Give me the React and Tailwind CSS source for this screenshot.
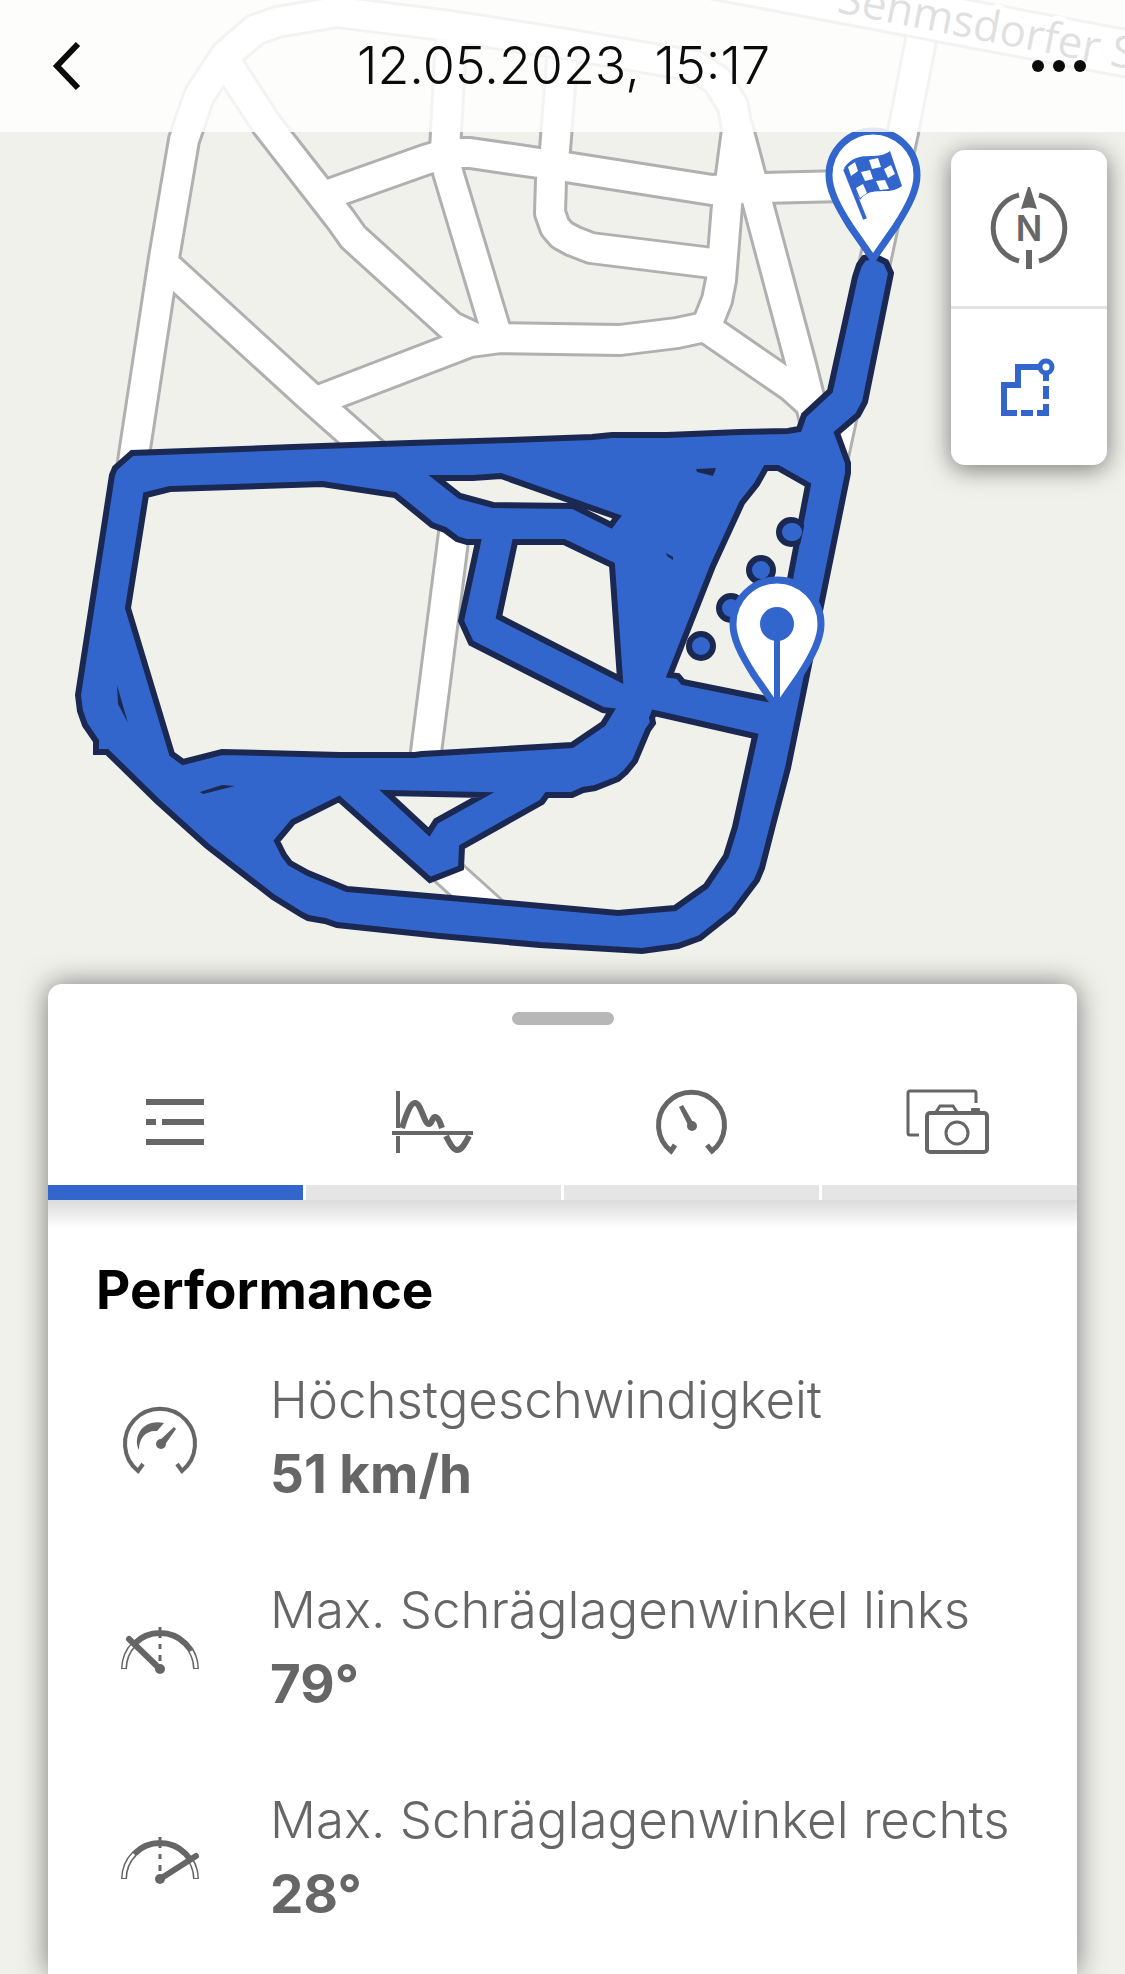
import { useState } from 'react'

const roads = [
  'M131 478 L134 455 L164 258 L184 140 L199 96 L226 55 L255 30 L277 22 L337 12 L450 26 L560 43 L695 66 L717 80 L733 106 L737 130 L727 205 L721 280 L717 300 L707 325',
  'M737 125 L801 365 L816 425',
  'M318 198 L425 160 L448 153 L470 153 L553 165 L712 190 L760 188 L885 185',
  'M228 65 L267 125 L341 220 L353 237 L452 327 L480 340',
  'M160 260 L311 398 L388 466',
  'M311 403 L470 342 L500 338 L620 340 L677 333 L705 327 L792 387 L812 405',
  'M451 40 L445 150 L448 172 L497 335',
  'M562 60 L555 150 L551 180 L550 213 L555 227 L562 235 L573 241 L591 248 L712 263',
  'M921 40 L903 132 L832 461',
  'M455 525 L425 760',
  'M440 865 L500 919',
]

const track = [
  // outer edge
  'M874 256 L886 262 L891 273 L865 402 L858 415 L837 433 L848 463 L848 473 L807 675 L788 768 L773 825 L762 868 L757 880 L733 912 L700 938 L678 946 L642 951 L540 945 L440 936 L337 925 L325 921 L308 918 L302 915 L273 897 L207 846 L157 801 L107 752 L96 752 L96 741 L85 725 L80 711 L78 695 L112 475 L115 468 L132 453 L293 447 L410 443 L510 440 L592 437 L612 435 L667 435 L740 432 L788 431 L799 429 L804 415 L830 391 L855 277 L859 265 L864 258 Z',
  // enclosed areas
  'M146 495 L170 489 L322 484 L395 495 L432 525 L445 530 L457 539 L467 542 L478 542 L461 621 L471 643 L603 710 L611 711 L603 724 L572 745 L440 753 L422 754 L415 755 L340 755 L222 752 L183 762 L172 754 L128 608 Z',
  'M437 478 L473 478 L501 476 L617 517 L611 525 L573 506 L493 505 L460 496 Z',
  'M515 542 L564 542 L612 565 L620 679 L499 617 Z',
  'M766 468 L778 468 L808 485 L767 699 L683 682 L678 676 L670 675 L713 566 L742 503 L757 484 Z',
  'M654 713 L755 736 L735 827 L726 856 L706 886 L675 908 L618 913 L440 897 L347 889 L308 873 L290 863 L284 855 L277 841 L293 822 L339 799 L430 880 L461 868 L462 847 L542 802 L547 795 L572 795 L583 790 L595 788 L618 779 L626 772 L635 761 L648 730 L653 723 L652 718 Z',
  'M387 793 L483 795 L436 821 L429 832 Z',
].join(' ')

const waypoints = [[761, 570], [731, 608], [701, 646]]

const flagGaps = [
  'M848 167 L855 162 L858 171 L851 176 Z',
  'M869 160 L878 158 L881 167 L872 169 Z',
  'M861 172 L870 170 L873 179 L865 181 Z',
  'M884 169 L891 165 L895 174 L888 178 Z',
  'M856 188 L863 184 L867 193 L860 198 Z',
  'M876 181 L885 180 L889 189 L880 190 Z',
]

function Pin({ x, y, children }) {
  return (
    <g>
      <path
        transform={`translate(${x} ${y})`}
        d="M0 84 L-23 51 C-37 29 -44 14 -44 0 A44 44 0 0 1 44 0 C44 14 37 29 23 51 Z"
        fill="#fff"
        stroke="#3366cc"
        strokeWidth="7"
      />
      {children}
    </g>
  )
}

function RideMap() {
  return (
    <svg viewBox="0 0 1125 990" className="absolute inset-x-0 top-0 w-full" role="img" aria-label="Karte">
      <g fill="none" strokeLinejoin="round">
        <path d="M700 -27 L1140 56" stroke="#b0b0b0" strokeWidth="50" />
        {roads.map((d) => <path key={d} d={d} stroke="#b0b0b0" strokeWidth="34" />)}
        <path d="M700 -27 L1140 56" stroke="#fff" strokeWidth="44" />
        {roads.map((d) => <path key={d} d={d} stroke="#fff" strokeWidth="28" />)}
      </g>
      <text
        transform="translate(836 12) rotate(11)"
        className="font-['Open_Sans','Noto_Sans',sans-serif] text-[44px]"
        fill="#333"
        stroke="#fff"
        strokeWidth="10"
        strokeLinejoin="round"
        paintOrder="stroke"
      >
        Sehmsdorfer S
      </text>

      <path d={track} fill="#3366cc" fillRule="evenodd" stroke="#1b2952" strokeWidth="6" />
      <g fill="#1b2952">
        <path d="M117 685 L128 723 L118 704 Z" />
        <path d="M200 792 L222 785 L235 786 L203 794 Z" />
        <path d="M696 469 L716 468 L713 476 L697 472 Z" />
        <path d="M666 553 L673 557 L673 560 L667 556 Z" />
      </g>
      <circle cx="791" cy="532" r="12" fill="#3366cc" stroke="#1b2952" strokeWidth="6" />
      <path d="M812 513 L804 551" stroke="#3366cc" strokeWidth="10" />
      <circle cx="793" cy="532" r="9" fill="#3366cc" />
      {waypoints.map(([cx, cy]) => (
        <circle key={cx} cx={cx} cy={cy} r="12" fill="#3366cc" stroke="#1b2952" strokeWidth="6" />
      ))}

      <Pin x={777} y={624}>
        <circle cx="777" cy="624" r="17" fill="#3366cc" />
        <path d="M777 630 V706" stroke="#3366cc" strokeWidth="6" />
      </Pin>
      <Pin x={873} y={175}>
        <path d="M845 169 L865 219" stroke="#3366cc" strokeWidth="4" />
        <path d="M844 168 C858 148 876 162 890 151 L902 186 C888 197 872 184 860 200 Z" fill="#3366cc" />
        {flagGaps.map((d) => <path key={d} d={d} fill="#fff" />)}
      </Pin>
    </svg>
  )
}

function CompassIcon() {
  return (
    <svg viewBox="0 0 96 96" className="size-24" fill="none" stroke="#666" aria-hidden="true">
      <path d="M38 15 A34 34 0 0 0 38 81 M58 15 A34 34 0 0 1 58 81" strokeWidth="5" />
      <path d="M47 7 H49 L56 29 Q48 26 40 29 Z" fill="#666" stroke="none" />
      <path d="M48 70 V89" strokeWidth="6" />
      <text x="48" y="61" textAnchor="middle" fill="#666" stroke="none" className="font-['Inter',sans-serif] text-[35px] font-semibold">N</text>
    </svg>
  )
}

function RouteIcon() {
  return (
    <svg viewBox="0 0 96 96" className="size-24" fill="none" stroke="#3366cc" strokeWidth="6" aria-hidden="true">
      <path d="M57 28 H37 V46 H23 V74 H36" />
      <path d="M40 74 H52 M56 74 H65 V65 M65 60 V47 M65 42 V35" />
      <circle cx="65" cy="28" r="6" strokeWidth="5" />
    </svg>
  )
}

function ListIcon() {
  return (
    <svg viewBox="0 0 96 96" className="size-24" stroke="#666" strokeWidth="6" aria-hidden="true">
      <path d="M18 28 H76 M18 48 H28 M34 48 H76 M18 68 H76" />
    </svg>
  )
}

function ChartIcon() {
  return (
    <svg viewBox="0 0 96 96" className="size-24" fill="none" stroke="#666" aria-hidden="true">
      <path d="M12 17 V54 M12 62 V79 M6 59 H87" strokeWidth="4" />
      <path d="M16 54 C21 38 25 29 29 29 C35 29 38 50 43 50 C46 50 46 43 49 43 C52 43 54 48 56 54" strokeWidth="6" />
      <path d="M60 62 C65 72 68 76 71 76 C75 76 78 72 83 62" strokeWidth="6" />
    </svg>
  )
}

function GaugeIcon() {
  return (
    <svg viewBox="0 0 96 96" className="size-24" fill="none" stroke="#666" aria-hidden="true">
      <path d="M31 71 L27 77 A33 33 0 1 1 68 77 L63 71" strokeWidth="5" />
      <path d="M35 33 L39 31 L50 50 L45 53 Z" fill="#666" stroke="none" />
      <circle cx="48" cy="52" r="5" fill="#666" stroke="none" />
    </svg>
  )
}

function CameraIcon() {
  return (
    <svg viewBox="0 0 96 96" className="size-24" fill="none" stroke="#666" strokeWidth="3" aria-hidden="true">
      <path d="M74 29 V19 Q74 17 72 17 H8 Q6 17 6 19 V59 Q6 61 8 61 H17" />
      <path d="M34 38 L38 32 H51 L55 38" />
      <rect x="25" y="39" width="60" height="39" rx="3" strokeWidth="4" />
      <circle cx="55" cy="59" r="11" />
      <path d="M69 39 V35 Q69 34 70 34 H77 Q78 34 78 35 V39 Z" fill="#666" stroke="none" />
    </svg>
  )
}

function SpeedIcon() {
  return (
    <svg viewBox="0 0 96 96" className="size-24" fill="none" stroke="#666" aria-hidden="true">
      <path d="M31 75 L26 82 A35 35 0 1 1 70 82 L65 75" strokeWidth="4" />
      <path d="M27 61 C20 47 32 29 52 34 L45 42 C34 41 27 49 27 61 Z" fill="#666" stroke="none" />
      <path d="M62 38 L64 40 L52 57 L47 52 Z" fill="#666" stroke="none" />
      <circle cx="49" cy="55" r="5" fill="#666" stroke="none" />
    </svg>
  )
}

function LeanIcon({ needle }) {
  return (
    <svg viewBox="0 0 96 96" className="size-24" fill="none" stroke="#666" aria-hidden="true">
      <path d="M12 70 A36 36 0 0 1 84 70" strokeWidth="6" />
      <path d="M12 69 A36 36 0 0 1 22 45 M79 52 A36 36 0 0 1 84 69" stroke="#fff" strokeWidth="3" />
      <path d="M48 28 V31 M48 35 V39 M48 45 V50 M48 56 V62" strokeWidth="3" />
      <path d={`M48 70 L${needle}`} strokeWidth="6" strokeLinecap="round" />
      <circle cx="48" cy="70" r="5" fill="#666" stroke="none" />
    </svg>
  )
}

const tabs = [
  { id: 'list', label: 'Übersicht', icon: <ListIcon /> },
  { id: 'chart', label: 'Verlauf', icon: <ChartIcon /> },
  { id: 'gauge', label: 'Messwerte', icon: <GaugeIcon /> },
  { id: 'photos', label: 'Fotos', icon: <CameraIcon /> },
]

const stats = [
  { label: 'Höchstgeschwindigkeit', value: '51 km/h', icon: <SpeedIcon /> },
  { label: 'Max. Schräglagenwinkel links', value: '79°', icon: <LeanIcon needle="17 40" /> },
  { label: 'Max. Schräglagenwinkel rechts', value: '28°', icon: <LeanIcon needle="84 47" /> },
]

export default function App() {
  const [activeTab, setActiveTab] = useState('list')

  return (
    <div className="relative flex min-h-screen flex-col overflow-hidden bg-[#f0f1eb] font-['Inter',sans-serif]">
      <RideMap />

      <header className="relative z-10 flex h-[132px] items-center justify-between bg-white/85 pr-[34px] pl-9">
        <button type="button" aria-label="Zurück" className="flex size-16 items-center justify-center">
          <svg viewBox="0 0 64 64" className="size-16" fill="none" stroke="#0b0b0b" strokeWidth="6" aria-hidden="true">
            <path d="M42 10 L21 32 L42 54" />
          </svg>
        </button>
        <h1 className="text-[52px] font-light text-[#0b0b0b]">12.05.2023, 15:17</h1>
        <button type="button" aria-label="Mehr" className="flex size-16 items-center justify-center gap-[9px]">
          <span className="size-3 shrink-0 rounded-full bg-[#0b0b0b]" />
          <span className="size-3 shrink-0 rounded-full bg-[#0b0b0b]" />
          <span className="size-3 shrink-0 rounded-full bg-[#0b0b0b]" />
        </button>
      </header>

      <div className="relative flex h-[852px] items-start justify-end p-[18px]">
        <div className="flex w-[156px] flex-col divide-y-3 divide-[#e3e3e3] rounded-[14px] bg-white shadow-[0_4px_24px_rgba(0,0,0,0.5)]">
          <button type="button" aria-label="Norden" className="flex h-[159px] items-center justify-center">
            <CompassIcon />
          </button>
          <button type="button" aria-label="Route" className="flex h-[156px] items-center justify-center">
            <RouteIcon />
          </button>
        </div>
      </div>

      <main className="relative mx-12 flex-1 rounded-t-[14px] bg-white shadow-[0_0_28px_rgba(0,0,0,0.5)]">
        <div className="flex h-[75px] justify-center pt-7">
          <div className="h-[13px] w-[102px] rounded-full bg-[#b7b7b7]" />
        </div>

        <div role="tablist" className="grid grid-cols-4 gap-[3px]">
          {tabs.map((tab) => (
            <button
              key={tab.id}
              type="button"
              role="tab"
              aria-label={tab.label}
              aria-selected={activeTab === tab.id}
              onClick={() => setActiveTab(tab.id)}
              className={`flex h-[141px] justify-center border-b-[15px] pt-[15px] ${activeTab === tab.id ? 'border-[#3366cc]' : 'border-[#e5e5e5]'}`}
            >
              {tab.icon}
            </button>
          ))}
        </div>
        <div className="h-7 bg-linear-to-b from-[#dcdcdc] via-[#ececec] to-white" />

        <section className="px-12 pt-[30px]">
          <h2 className="text-[53px] leading-[64px] font-bold text-black">Performance</h2>
          <ul className="mt-10 space-y-[60px]">
            {stats.map((stat) => (
              <li key={stat.label} className="flex items-center gap-[62px] pl-4">
                {stat.icon}
                <div className="leading-[75px] whitespace-nowrap text-[#666]">
                  <p className="text-[51px] font-light">{stat.label}</p>
                  <p className="text-[53px] font-bold">{stat.value}</p>
                </div>
              </li>
            ))}
          </ul>
        </section>
      </main>
    </div>
  )
}
